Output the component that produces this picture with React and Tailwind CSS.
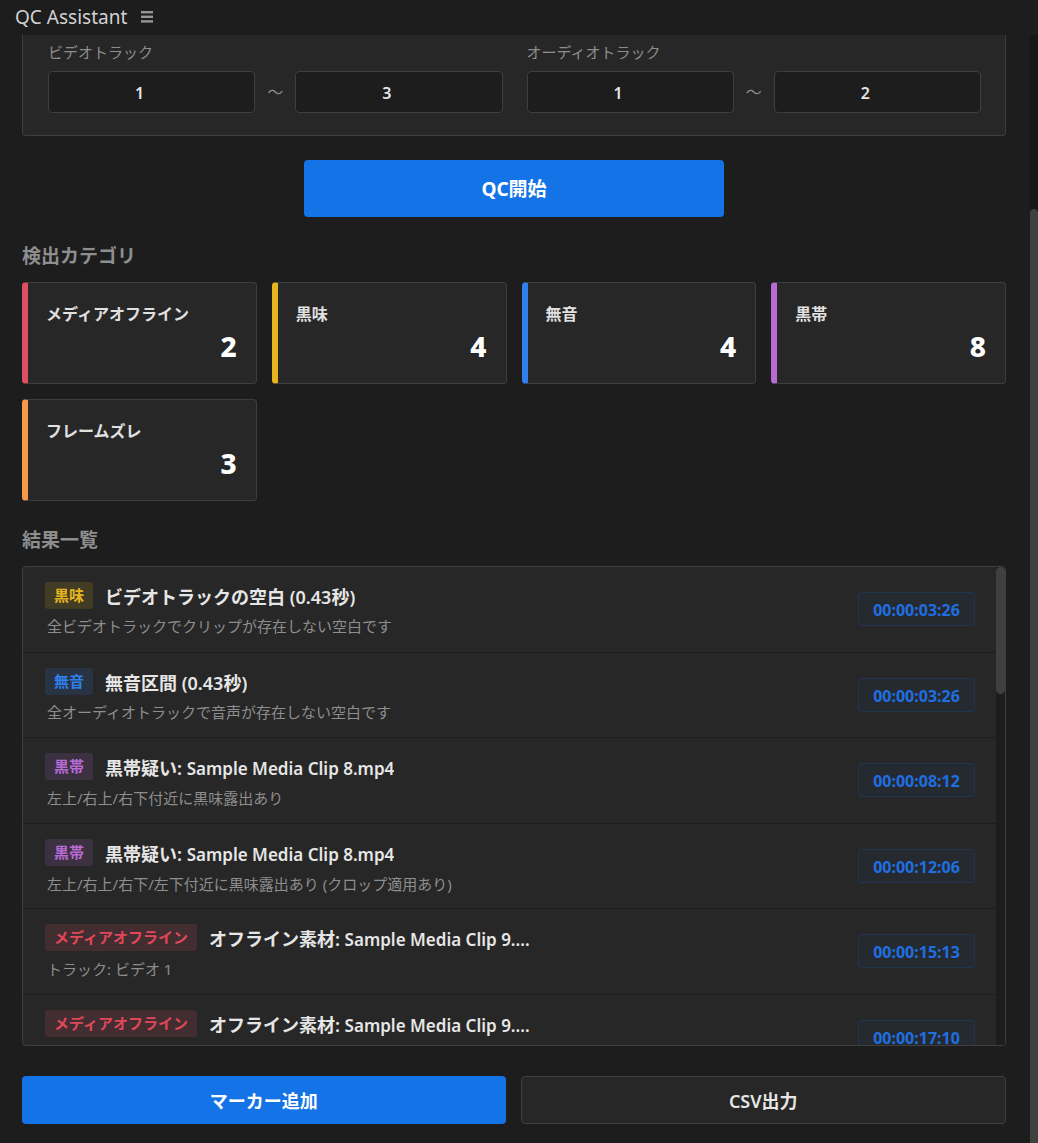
import React, { useState } from 'react';
import clsx from 'clsx';

const CATEGORIES = [
  { name: 'メディアオフライン', count: 2, bar: 'border-l-[#dd4f62]' },
  { name: '黒味', count: 4, bar: 'border-l-[#e6b51e]' },
  { name: '無音', count: 4, bar: 'border-l-[#2f80ed]' },
  { name: '黒帯', count: 8, bar: 'border-l-[#b76bd3]' },
  { name: 'フレームズレ', count: 3, bar: 'border-l-[#f2994a]' },
];

const BADGES = {
  'メディアオフライン': 'bg-[#dd4f62]/15 text-[#e0485a]',
  '黒味': 'bg-[#e6b51e]/15 text-[#e6b51e]',
  '無音': 'bg-[#2f80ed]/15 text-[#2f80ed]',
  '黒帯': 'bg-[#b76bd3]/15 text-[#b76bd3]',
};

const RESULTS = [
  { category: '黒味', title: 'ビデオトラックの空白 (0.43秒)', detail: '全ビデオトラックでクリップが存在しない空白です', time: '00:00:03:26' },
  { category: '無音', title: '無音区間 (0.43秒)', detail: '全オーディオトラックで音声が存在しない空白です', time: '00:00:03:26' },
  { category: '黒帯', title: '黒帯疑い: ', clip: 'Sample Media Clip 8.mp4', detail: '左上/右上/右下付近に黒味露出あり', time: '00:00:08:12' },
  { category: '黒帯', title: '黒帯疑い: ', clip: 'Sample Media Clip 8.mp4', detail: '左上/右上/右下/左下付近に黒味露出あり (クロップ適用あり)', time: '00:00:12:06' },
  { category: 'メディアオフライン', title: 'オフライン素材: ', clip: 'Sample Media Clip 9....', detail: 'トラック: ビデオ 1', time: '00:00:15:13' },
  { category: 'メディアオフライン', title: 'オフライン素材: ', clip: 'Sample Media Clip 9....', detail: 'トラック: ビデオ 1', time: '00:00:17:10' },
];

function TrackInput({ label, initial }) {
  const [value, setValue] = useState(initial);
  return (
    <input
      type="number"
      aria-label={label}
      value={value}
      onChange={(e) => setValue(e.target.value)}
      className="h-[42px] min-w-0 flex-1 appearance-none rounded-[4px] border border-[#3e3e3e] bg-[#1d1d1d] pt-px pr-6 text-center text-base font-semibold text-[#e6e6e6] outline-none [appearance:textfield] focus:border-[#1473e6] [&::-webkit-inner-spin-button]:appearance-none"
    />
  );
}

function TrackRange({ label, from, to }) {
  return (
    <fieldset className="min-w-0 flex-1">
      <legend className="mb-[9px] text-[15px] leading-5 text-[#8e8e8e]">{label}</legend>
      <div className="flex items-center">
        <TrackInput label={`${label} 開始`} initial={from} />
        <span className="w-10 text-center text-base text-[#8e8e8e]">〜</span>
        <TrackInput label={`${label} 終了`} initial={to} />
      </div>
    </fieldset>
  );
}

function SectionTitle({ children }) {
  return <h2 className="mt-[23px] mb-[10px] text-[19px] leading-8 font-bold text-[#8e8e8e]">{children}</h2>;
}

function CategoryCard({ name, count, bar }) {
  return (
    <button
      type="button"
      className={clsx('flex h-[102px] flex-col rounded-[4px] border border-l-6 border-[#3e3e3e] bg-[#272727] pt-[19px] pr-[19px] pl-[18px] text-left', bar)}
    >
      <span className="text-base leading-6 font-semibold text-[#e0e0e0]">{name}</span>
      <span className="self-end text-[28px] leading-10 font-extrabold text-white">{count}</span>
    </button>
  );
}

function ResultRow({ category, title, clip, detail, time }) {
  return (
    <li className="flex items-start justify-between border-b border-[#1d1d1d] pt-[15px] pr-[21px] pl-[22px] odd:h-[86px] even:h-[85px]">
      <div className="min-w-0">
        <div className="flex items-start gap-3">
          <span className={clsx('rounded-[3px] px-[9px] text-[15px] leading-[27px] font-bold', BADGES[category])}>
            {category}
          </span>
          <span className="truncate text-lg leading-[30px] font-semibold text-[#e6e6e6]">
            {title}
            {clip && <span className="text-[17px]">{clip}</span>}
          </span>
        </div>
        <p className="pl-[2px] text-[15px] leading-7 text-[#8e8e8e]">{detail}</p>
      </div>
      <button
        type="button"
        className="mt-[10px] h-[34px] w-[117px] shrink-0 rounded-[3px] border border-[#20354f] bg-[#252a31] pt-px text-base font-bold text-[#1f6fe0]"
      >
        {time}
      </button>
    </li>
  );
}

export default function App() {
  return (
    <div className="flex h-screen flex-col overflow-hidden bg-[#1d1d1d] font-['Noto_Sans','Noto_Sans_CJK_JP',sans-serif] text-[#e6e6e6]">
      <header className="flex h-[35px] shrink-0 items-center gap-[14px] pb-[2px] pl-[15px]">
        <h1 className="text-[19px] leading-8 font-normal text-[#d2d2d2]">QC Assistant</h1>
        <button type="button" aria-label="パネルメニュー" className="pt-px text-[#969696]">
          <svg width="12" height="12" viewBox="0 0 12 12" fill="currentColor">
            <rect y="0" width="12" height="2.4" />
            <rect y="4.6" width="12" height="2.4" />
            <rect y="9.2" width="12" height="2.4" />
          </svg>
        </button>
      </header>

      <div className="flex min-h-0 flex-1">
        <main className="min-w-0 flex-1 overflow-hidden pr-6 pl-[22px]">
          {/* Track range */}
          <section className="flex gap-6 rounded-b-[4px] border border-t-0 border-[#3e3e3e] bg-[#272727] pt-[7px] pr-6 pb-[22px] pl-[25px]">
            <TrackRange label="ビデオトラック" from="1" to="3" />
            <TrackRange label="オーディオトラック" from="1" to="2" />
          </section>

          <button
            type="button"
            className="mx-auto mt-6 block h-[57px] w-[420px] rounded-[4px] bg-[#1473e6] pt-[2px] text-[19px] font-bold text-white"
          >
            QC開始
          </button>

          {/* Categories */}
          <SectionTitle>検出カテゴリ</SectionTitle>
          <div className="grid grid-cols-4 gap-[15px]">
            {CATEGORIES.map((c) => (
              <CategoryCard key={c.name} {...c} />
            ))}
          </div>

          {/* Results */}
          <SectionTitle>結果一覧</SectionTitle>
          <div className="flex h-120 overflow-hidden rounded-[4px] border border-[#3e3e3e] bg-[#272727]">
            <ul className="min-w-0 flex-1">
              {RESULTS.map((r, i) => (
                <ResultRow key={i} {...r} />
              ))}
            </ul>
            <div className="w-[9px] shrink-0 bg-[#1d1d1d]">
              <div className="h-[127px] rounded-full bg-[#404040]" />
            </div>
          </div>

          {/* Actions */}
          <div className="mt-[30px] mb-5 flex gap-[15px]">
            <button type="button" className="h-12 flex-1 rounded-[4px] bg-[#1473e6] pt-[2px] text-lg font-semibold text-white">
              マーカー追加
            </button>
            <button type="button" className="h-12 flex-1 rounded-[4px] border border-[#3e3e3e] bg-[#272727] pt-[2px] text-lg font-semibold text-[#e6e6e6]">
              CSV出力
            </button>
          </div>
        </main>

        {/* Page scrollbar */}
        <div className="w-2 shrink-0 bg-[#171717] pt-[174px]">
          <div className="h-full rounded-t-[4px] bg-[#404040]" />
        </div>
      </div>
    </div>
  );
}
